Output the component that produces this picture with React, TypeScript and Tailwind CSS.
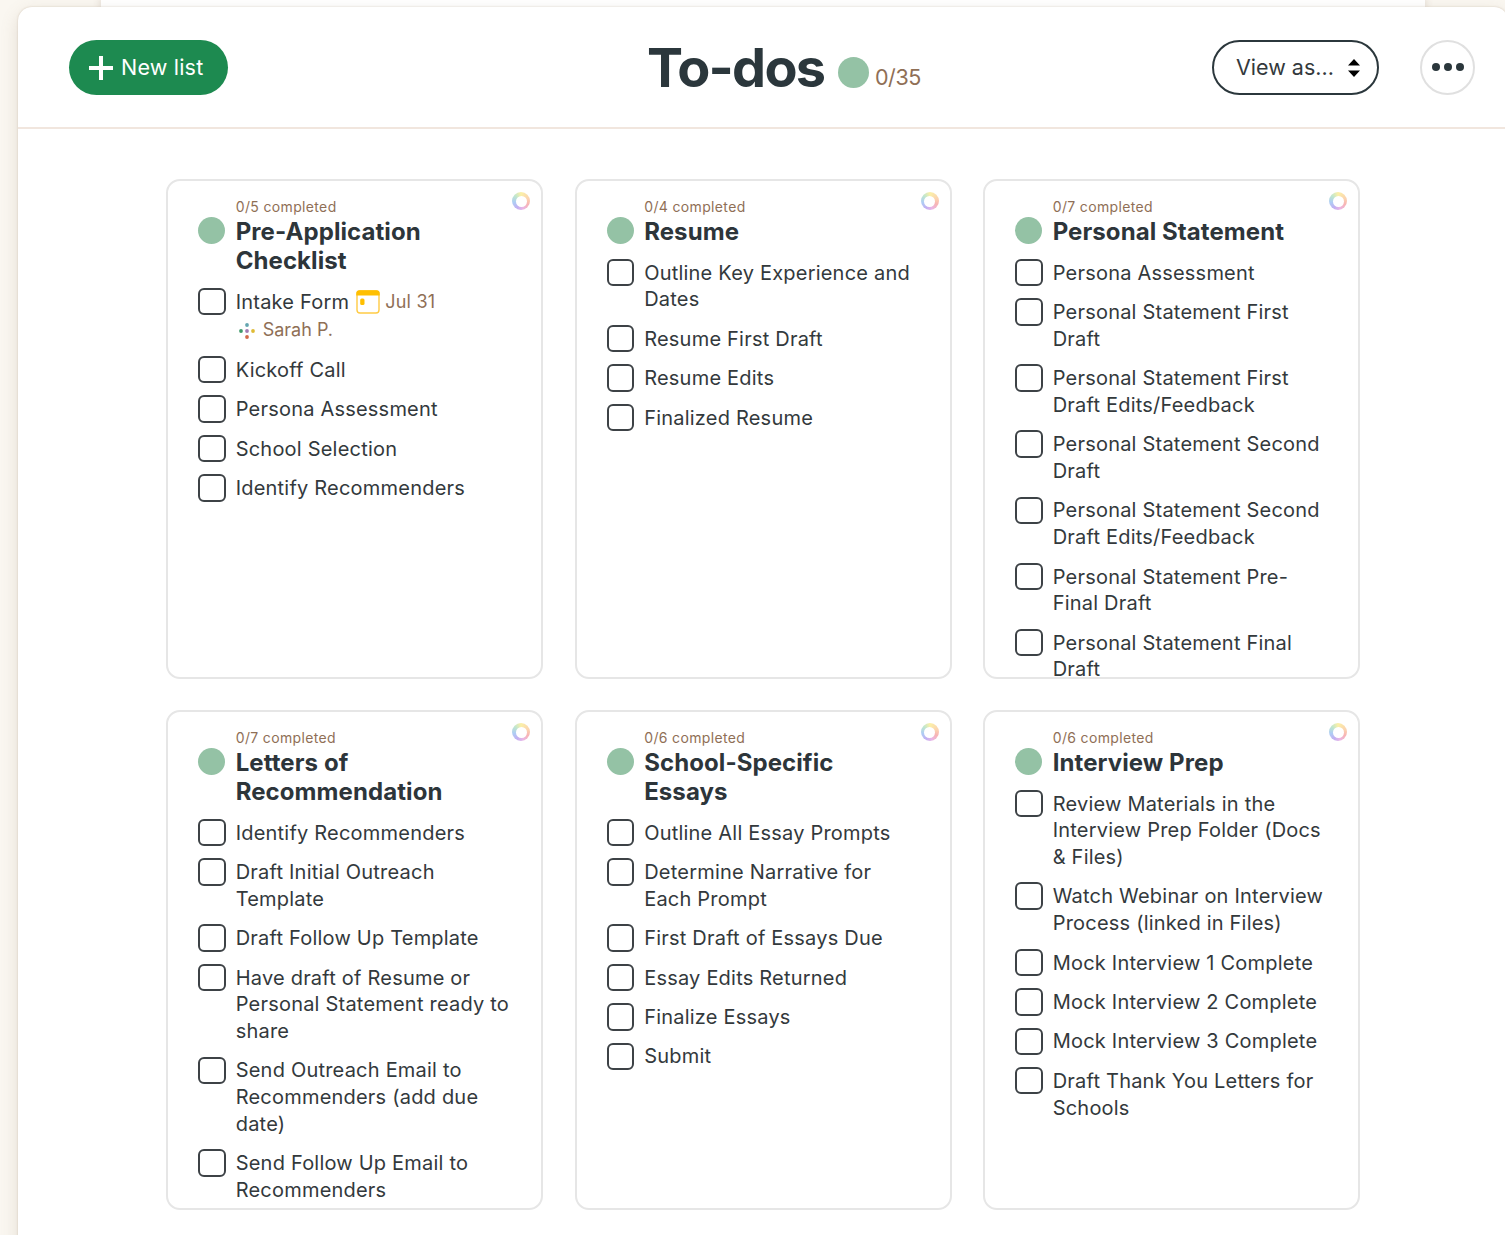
import { useState } from "react";

interface Todo {
  text: string;
  due?: string;
  assignee?: string;
}

interface TodoList {
  id: string;
  title: string;
  todos: Todo[];
}

const lists: TodoList[] = [
  {
    id: "pre-application",
    title: "Pre-Application\nChecklist",
    todos: [
      { text: "Intake Form", due: "Jul 31", assignee: "Sarah P." },
      { text: "Kickoff Call" },
      { text: "Persona Assessment" },
      { text: "School Selection" },
      { text: "Identify Recommenders" },
    ],
  },
  {
    id: "resume",
    title: "Resume",
    todos: [
      { text: "Outline Key Experience and\nDates" },
      { text: "Resume First Draft" },
      { text: "Resume Edits" },
      { text: "Finalized Resume" },
    ],
  },
  {
    id: "personal-statement",
    title: "Personal Statement",
    todos: [
      { text: "Persona Assessment" },
      { text: "Personal Statement First\nDraft" },
      { text: "Personal Statement First\nDraft Edits/Feedback" },
      { text: "Personal Statement Second\nDraft" },
      { text: "Personal Statement Second\nDraft Edits/Feedback" },
      { text: "Personal Statement Pre-\nFinal Draft" },
      { text: "Personal Statement Final\nDraft" },
    ],
  },
  {
    id: "letters",
    title: "Letters of\nRecommendation",
    todos: [
      { text: "Identify Recommenders" },
      { text: "Draft Initial Outreach\nTemplate" },
      { text: "Draft Follow Up Template" },
      { text: "Have draft of Resume or\nPersonal Statement ready to\nshare" },
      { text: "Send Outreach Email to\nRecommenders (add due\ndate)" },
      { text: "Send Follow Up Email to\nRecommenders" },
    ],
  },
  {
    id: "essays",
    title: "School-Specific\nEssays",
    todos: [
      { text: "Outline All Essay Prompts" },
      { text: "Determine Narrative for\nEach Prompt" },
      { text: "First Draft of Essays Due" },
      { text: "Essay Edits Returned" },
      { text: "Finalize Essays" },
      { text: "Submit" },
    ],
  },
  {
    id: "interview",
    title: "Interview Prep",
    todos: [
      { text: "Review Materials in the\nInterview Prep Folder (Docs\n& Files)" },
      { text: "Watch Webinar on Interview\nProcess (linked in Files)" },
      { text: "Mock Interview 1 Complete" },
      { text: "Mock Interview 2 Complete" },
      { text: "Mock Interview 3 Complete" },
      { text: "Draft Thank You Letters for\nSchools" },
    ],
  },
];

// lists whose total differs from the todos shown on the card
const totals: Record<string, number> = { letters: 7 };

const CalendarIcon = () => (
  <svg width="24" height="24" viewBox="0 0 24 24" className="shrink-0">
    <rect x="1" y="1" width="22" height="22" rx="3" fill="none" stroke="#ffcb45" strokeWidth="1.4" />
    <path d="M.3 5.5V3.5A3.2 3.2 0 0 1 3.5.3h17A3.2 3.2 0 0 1 23.7 3.5v2z" fill="#ffbf00" />
    <rect x="4.2" y="8.5" width="4.3" height="6.5" rx="1.5" fill="#ffbf00" />
  </svg>
);

const AssigneeIcon = () => (
  <svg width="16" height="16" viewBox="0 0 16 16" className="shrink-0">
    <circle cx="8" cy="2" r="1.9" fill="#64a5b0" />
    <circle cx="2" cy="8" r="1.9" fill="#3f9a6b" />
    <circle cx="8" cy="8" r="1.9" fill="#a27bb4" />
    <circle cx="14" cy="8" r="1.9" fill="#dfbb35" />
    <circle cx="8" cy="14" r="1.9" fill="#d26a48" />
  </svg>
);

const ColorRing = () => (
  <span className="absolute right-[11px] top-[11px] flex size-[18px] items-center justify-center rounded-full bg-[conic-gradient(#fbf0a8,#fbd3b0_20%,#f8b4b4_32%,#e9b6e6_46%,#c2b0f2_58%,#aecdf5_72%,#bfe6cf_86%,#fbf0a8)]">
    <span className="size-[11px] rounded-full bg-white" />
  </span>
);

interface TodoRowProps {
  todo: Todo;
  checked: boolean;
  onToggle: () => void;
}

const TodoRow = ({ todo, checked, onToggle }: TodoRowProps) => (
  <li className="flex gap-[10px]">
    <button
      onClick={onToggle}
      aria-label={todo.text}
      className={`mt-[-0.9px] mb-[0.1px] size-[27.5px] shrink-0 rounded-[6px] border-2 border-[#3d4246] ${checked ? "bg-[#1d8a50]" : "bg-white"}`}
    />
    <div className="text-[20px] leading-[26.7px] tracking-[0.21px] whitespace-pre text-[#33393c]">
      <div className="flex items-center">
        <span>{todo.text}</span>
        {todo.due && (
          <span className="ml-[7px] flex items-center gap-[5px] text-[18px] text-[#8f6f56]">
            <CalendarIcon />
            {todo.due}
          </span>
        )}
      </div>
      {todo.assignee && (
        <div className="mt-[2px] flex items-center gap-2 pl-[3px] text-[18px] tracking-normal text-[#8f6f56]">
          <AssigneeIcon />
          {todo.assignee}
        </div>
      )}
    </div>
  </li>
);

const ListCard = ({ list }: { list: TodoList }) => {
  const [done, setDone] = useState<number[]>([]);

  const toggle = (index: number) =>
    setDone(done.includes(index) ? done.filter((i) => i !== index) : [...done, index]);

  return (
    <section className="relative h-[499.5px] overflow-hidden rounded-[14px] border-2 border-[#e6e6e6] bg-white pt-[16px] pl-[30.2px]">
      <ColorRing />
      <header className="flex gap-[10.5px]">
        <span className="mt-[20px] size-[27px] shrink-0 rounded-full bg-[#94c2a5]" />
        <div>
          <p className="text-[14px] leading-[20px] tracking-[0.35px] text-[#8f6f56]">
            {done.length}/{totals[list.id] ?? list.todos.length} completed
          </p>
          <h2 className="text-[24px] leading-[29px] font-bold tracking-[0.08px] whitespace-pre text-[#2d353a]">{list.title}</h2>
        </div>
      </header>
      <ul className="mt-[13.5px] flex flex-col gap-[12.75px]">
        {list.todos.map((todo, index) => (
          <TodoRow
            key={index}
            todo={todo}
            checked={done.includes(index)}
            onToggle={() => toggle(index)}
          />
        ))}
      </ul>
    </section>
  );
};

const Header = () => (
  <header className="flex h-[122px] items-start border-b-2 border-[#f1e6de] pt-[33px] pl-[51px]">
    <button className="flex h-[55px] w-[159px] items-center gap-[8px] rounded-full bg-[#1d8a50] pl-[20px] text-[21.5px] tracking-[0.2px] text-white">
      <svg width="24" height="24" viewBox="0 0 24 24" fill="none" stroke="currentColor" strokeWidth="4">
        <path d="M12 0v24M0 12h24" />
      </svg>
      New list
    </button>
    <div className="ml-[419px] flex w-[274px] items-center">
      <h1 className="mt-[-2px] w-[178px] shrink-0 text-[54px] leading-[60px] font-bold tracking-[-1.7px] whitespace-nowrap text-[#2b373c]">
        To-dos
      </h1>
      <span className="mt-[6px] ml-[13px] size-[31px] shrink-0 rounded-full bg-[#94c2a5]" />
      <span className="mt-[16px] ml-[6px] text-[21.5px] leading-[26px] tracking-[-0.45px] text-[#8f6f56]">0/35</span>
    </div>
    <button className="ml-[291px] flex h-[55px] w-[167px] items-center justify-between rounded-full border-2 border-[#2b373c] pr-[17px] pl-[22px] text-[21.5px] text-[#33393c]">
      View as...
      <svg width="12" height="18" viewBox="0 0 12 18" className="text-black">
        <path d="M6 0l6 6.5H0zM6 18l6-6.5H0z" fill="currentColor" />
      </svg>
    </button>
    <button className="ml-[41px] flex size-[55px] items-center justify-center gap-[4px] rounded-full border-2 border-[#e0e0e0] pb-[2px]">
      <span className="size-[8px] rounded-full bg-[#2b373c]" />
      <span className="size-[8px] rounded-full bg-[#2b373c]" />
      <span className="size-[8px] rounded-full bg-[#2b373c]" />
    </button>
  </header>
);

const App = () => {
  return (
    <div className="h-[1235px] w-[1505px] overflow-hidden bg-[#faf7f1] font-['Inter',sans-serif]">
      <div className="ml-[101px] h-[7px] w-[1324px] bg-white shadow-[0_0_8px_rgba(110,80,60,0.3)]" />
      <main className="relative ml-[18px] h-[1260px] w-[1490px] rounded-[14px] bg-white shadow-[0_0_2px_rgba(150,120,90,0.35),0_6px_18px_rgba(140,115,90,0.2)]">
        <Header />
        <div className="mt-[50px] ml-[148px] grid w-[1194px] grid-cols-3 gap-[31.5px]">
          {lists.map((list) => (
            <ListCard key={list.id} list={list} />
          ))}
        </div>
      </main>
    </div>
  );
};

export default App;
